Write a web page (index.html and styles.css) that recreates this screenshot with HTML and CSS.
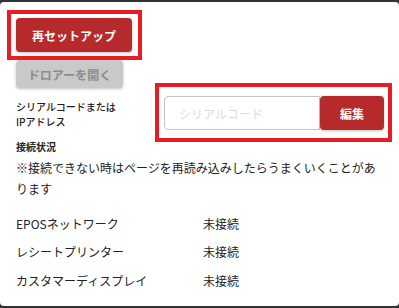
FILE: index.html
```html
<!DOCTYPE html>
<html lang="ja">
<head>
  <meta charset="UTF-8">
  <title>デバイス設定</title>
  <link rel="stylesheet" href="styles.css">
</head>
<body>
  <div class="modal">
    <button class="btn btn-red setup-btn marked">再セットアップ</button>
    <button class="btn btn-gray drawer-btn">ドロアーを開く</button>

    <div class="serial-row">
      <label class="serial-label" for="serial">シリアルコードまたは<br>IPアドレス</label>
      <div class="serial-group marked">
        <input type="text" id="serial" placeholder="シリアルコード">
        <button class="btn btn-red edit-btn">編集</button>
      </div>
    </div>

    <h4 class="status-title">接続状況</h4>
    <p class="note">※接続できない時はページを再読み込みしたらうまくいくことがあります</p>

    <table class="status">
      <tr><td>EPOSネットワーク</td><td>未接続</td></tr>
      <tr><td>レシートプリンター</td><td>未接続</td></tr>
      <tr><td>カスタマーディスプレイ</td><td>未接続</td></tr>
    </table>
  </div>
</body>
</html>
```

FILE: styles.css
```css
* {
  margin: 0;
  padding: 0;
  box-sizing: border-box;
}
body {
  font-family: "Noto Sans CJK JP", "Noto Sans", sans-serif;
  background: #333;
  color: #222;
  padding: 2px 0;
}
.modal {
  background: white;
  height: 304px;
  border-radius: 4px;
  padding: 16px 15px 0 16px;
  overflow: hidden;
}
.btn {
  display: block;
  border: none;
  border-radius: 4px;
  font-family: inherit;
  font-weight: bold;
  font-size: 12px;
  box-shadow: 0 1px 3px rgba(0,0,0,0.25);
  cursor: pointer;
}
.btn-red {
  background: #b72a2b;
  color: white;
}
.btn-gray {
  background: #c9c9c9;
  color: #8c8c8c;
}
.setup-btn {
  width: 116px;
  height: 34px;
}
.drawer-btn {
  width: 107px;
  height: 28px;
  margin-top: 8px;
}
.marked {
  position: relative;
}
.marked::after {
  content: "";
  position: absolute;
  border: 4px solid #e91c24;
  pointer-events: none;
}
.setup-btn::after {
  top: -8px;
  left: -9px;
  right: -10px;
  bottom: -8px;
}
.serial-row {
  display: flex;
  align-items: center;
  margin-top: 8px;
}
.serial-label {
  flex: 1;
  font-size: 10px;
  font-weight: 500;
  line-height: 15px;
  padding-top: 1px;
}
.serial-group {
  display: flex;
  width: 220px;
  height: 34px;
}
.serial-group::after {
  top: -13px;
  left: -9px;
  right: -8px;
  bottom: -12px;
}
.serial-group input {
  width: 156px;
  height: 34px;
  border: 1px solid #c4c4c4;
  border-radius: 4px 0 0 4px;
  padding-left: 14px;
  font-family: inherit;
  font-size: 12px;
  outline: none;
}
.serial-group input::placeholder {
  color: #dcdcdc;
}
.edit-btn {
  width: 64px;
  height: 34px;
}
.status-title {
  font-size: 10px;
  font-weight: bold;
  line-height: 14px;
  margin-top: 10px;
}
.note {
  font-size: 12px;
  line-height: 21px;
  margin-top: 3px;
}
.status {
  border-collapse: collapse;
  margin-top: 10px;
  font-size: 12px;
}
.status td {
  height: 28.5px;
  padding: 0;
}
.status td:first-child {
  width: 187px;
}
```
